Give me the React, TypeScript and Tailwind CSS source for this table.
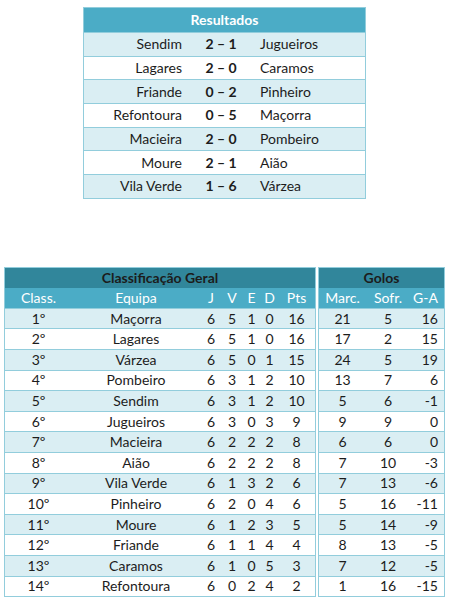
import React from "react";

const results = [
  ["Sendim", "2 – 1", "Jugueiros"],
  ["Lagares", "2 – 0", "Caramos"],
  ["Friande", "0 – 2", "Pinheiro"],
  ["Refontoura", "0 – 5", "Maçorra"],
  ["Macieira", "2 – 0", "Pombeiro"],
  ["Moure", "2 – 1", "Aião"],
  ["Vila Verde", "1 – 6", "Várzea"],
];

// class, team, J, V, E, D, Pts, Marc, Sofr, G-A
const standings: (string | number)[][] = [
  ["1º", "Maçorra", 6, 5, 1, 0, 16, 21, 5, 16],
  ["2º", "Lagares", 6, 5, 1, 0, 16, 17, 2, 15],
  ["3º", "Várzea", 6, 5, 0, 1, 15, 24, 5, 19],
  ["4º", "Pombeiro", 6, 3, 1, 2, 10, 13, 7, 6],
  ["5º", "Sendim", 6, 3, 1, 2, 10, 5, 6, -1],
  ["6º", "Jugueiros", 6, 3, 0, 3, 9, 9, 9, 0],
  ["7º", "Macieira", 6, 2, 2, 2, 8, 6, 6, 0],
  ["8º", "Aião", 6, 2, 2, 2, 8, 7, 10, -3],
  ["9º", "Vila Verde", 6, 1, 3, 2, 6, 7, 13, -6],
  ["10º", "Pinheiro", 6, 2, 0, 4, 6, 5, 16, -11],
  ["11º", "Moure", 6, 1, 2, 3, 5, 5, 14, -9],
  ["12º", "Friande", 6, 1, 1, 4, 4, 8, 13, -5],
  ["13º", "Caramos", 6, 1, 0, 5, 3, 7, 12, -5],
  ["14º", "Refontoura", 6, 0, 2, 4, 2, 1, 16, -15],
];

const leftCols = "grid grid-cols-[67px_128px_22px_20px_19px_17px_37px] items-center";
const rightCols = "grid grid-cols-[47px_44px_34px] items-center";

export default function App() {
  return (
    <div className="w-[451px] h-[602px] bg-white text-[14px] text-[#1c1c1c] font-['Lato','Liberation_Sans',sans-serif] leading-none">
      {/* Resultados */}
      <div className="ml-[83px] pt-[7px] w-[283px]">
        <div className="border border-[#92cddc]">
          <div className="h-[24px] bg-[#4bacc6] text-white font-bold flex items-center justify-center">
            Resultados
          </div>
          {results.map((r, i) => (
            <div
              key={i}
              className={`grid grid-cols-[106px_62px_1fr] h-[23.7px] items-center border-t border-[#92cddc] ${
                i % 2 === 0 ? "bg-[#daeef3]" : "bg-white"
              }`}
            >
              <span className="text-right pr-[8px]">{r[0]}</span>
              <span className="text-center font-bold">{r[1]}</span>
              <span className="pl-[8px]">{r[2]}</span>
            </div>
          ))}
        </div>
      </div>

      {/* Classificação */}
      <div className="flex ml-[4px] mt-[68px]">
        <div className="w-[312px] border border-[#92cddc]">
          <div className="h-[20px] bg-[#31869b] font-bold flex items-center justify-center">
            Classificação Geral
          </div>
          <div className={`${leftCols} h-[20px] bg-[#4bacc6] text-white text-center`}>
            <span>Class.</span>
            <span>Equipa</span>
            <span>J</span>
            <span>V</span>
            <span>E</span>
            <span>D</span>
            <span>Pts</span>
          </div>
          {standings.map((s, i) => (
            <div
              key={i}
              className={`${leftCols} h-[20.6px] border-t border-[#92cddc] text-center ${
                i % 2 === 0 ? "bg-[#daeef3]" : "bg-white"
              }`}
            >
              {s.slice(0, 7).map((v, j) => (
                <span key={j}>{v}</span>
              ))}
            </div>
          ))}
        </div>

        <div className="w-[127px] ml-[2px] border border-[#92cddc]">
          <div className="h-[20px] bg-[#31869b] font-bold flex items-center justify-center">
            Golos
          </div>
          <div className={`${rightCols} h-[20px] bg-[#4bacc6] text-white`}>
            <span className="text-center">Marc.</span>
            <span className="text-center">Sofr.</span>
            <span className="text-right pr-[6px]">G-A</span>
          </div>
          {standings.map((s, i) => (
            <div
              key={i}
              className={`${rightCols} h-[20.6px] border-t border-[#92cddc] ${
                i % 2 === 0 ? "bg-[#daeef3]" : "bg-white"
              }`}
            >
              <span className="text-center">{s[7]}</span>
              <span className="text-center">{s[8]}</span>
              <span className="text-right pr-[6px]">{s[9]}</span>
            </div>
          ))}
        </div>
      </div>
    </div>
  );
}
